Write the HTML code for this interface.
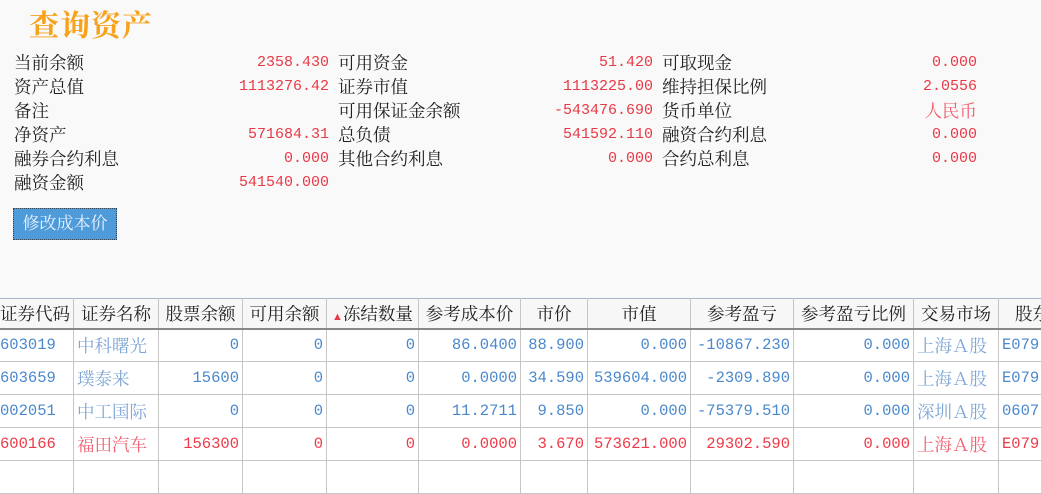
<!DOCTYPE html>
<html><head><meta charset="utf-8"><style>
*{margin:0;padding:0;box-sizing:border-box}
body{width:1041px;height:477px;overflow:hidden;background:#f9f9f9;font-family:"Liberation Serif","Noto Serif CJK SC",serif;font-size:17.5px;color:#222;position:relative}
.t{position:absolute;left:29px;top:1px;font-size:30px;color:#f7a21b;font-family:"Noto Serif CJK SC",serif;font-weight:bold;letter-spacing:1px}
.r{position:absolute;height:24px;line-height:24px;white-space:nowrap}
.n{font-family:"Liberation Mono",monospace;font-size:15px;color:#e83a46;text-align:right}
.btn{position:absolute;left:13px;top:208px;width:104px;height:32px;background:#4f9bd9;border:1px dotted #345;color:#e8f2ff;line-height:30px;text-align:center;font-size:17px}
table{position:absolute;left:-4px;top:298px;width:1062px;border-collapse:collapse;table-layout:fixed;background:#fff}
td,th{height:33px;border:1px solid #c6c6c6;white-space:nowrap;overflow:hidden;padding:0 3px;font-weight:normal;text-align:right;font-family:"Liberation Mono","Noto Serif CJK SC",monospace;font-size:15.5px}
th{background:#f7f7f7;height:30px;border-top:1px solid #a8b8c8;border-bottom:2px solid #888;border-left:1px solid #888;text-align:center;font-family:"Liberation Serif","Noto Serif CJK SC",serif;font-size:17.5px;color:#222;padding:0 1px}
td.c{text-align:left;font-family:"Noto Serif CJK SC",serif;font-size:17.5px}
.b td{color:#4a88cc}
.b td.c{color:#7ea6d6}
.rd td{color:#ee3a48}
.rd td.c{color:#f06070}
</style></head><body>
<div class="t">查询资产</div>
<div class="r" style="left:14px;top:51px">当前余额</div><div class="r n" style="left:180px;width:149px;top:51px">2358.430</div>
<div class="r" style="left:338px;top:51px">可用资金</div><div class="r n" style="left:500px;width:153px;top:51px">51.420</div>
<div class="r" style="left:662px;top:51px">可取现金</div><div class="r n" style="left:820px;width:157px;top:51px">0.000</div>
<div class="r" style="left:14px;top:75px">资产总值</div><div class="r n" style="left:180px;width:149px;top:75px">1113276.42</div>
<div class="r" style="left:338px;top:75px">证券市值</div><div class="r n" style="left:500px;width:153px;top:75px">1113225.00</div>
<div class="r" style="left:662px;top:75px">维持担保比例</div><div class="r n" style="left:820px;width:157px;top:75px">2.0556</div>
<div class="r" style="left:14px;top:99px">备注</div>
<div class="r" style="left:338px;top:99px">可用保证金余额</div><div class="r n" style="left:500px;width:153px;top:99px">-543476.690</div>
<div class="r" style="left:662px;top:99px">货币单位</div><div class="r n" style="left:820px;width:157px;top:99px;font-family:'Noto Serif CJK SC',serif;font-size:17.5px;color:#f06070">人民币</div>
<div class="r" style="left:14px;top:123px">净资产</div><div class="r n" style="left:180px;width:149px;top:123px">571684.31</div>
<div class="r" style="left:338px;top:123px">总负债</div><div class="r n" style="left:500px;width:153px;top:123px">541592.110</div>
<div class="r" style="left:662px;top:123px">融资合约利息</div><div class="r n" style="left:820px;width:157px;top:123px">0.000</div>
<div class="r" style="left:14px;top:147px">融券合约利息</div><div class="r n" style="left:180px;width:149px;top:147px">0.000</div>
<div class="r" style="left:338px;top:147px">其他合约利息</div><div class="r n" style="left:500px;width:153px;top:147px">0.000</div>
<div class="r" style="left:662px;top:147px">合约总利息</div><div class="r n" style="left:820px;width:157px;top:147px">0.000</div>
<div class="r" style="left:14px;top:171px">融资金额</div><div class="r n" style="left:180px;width:149px;top:171px">541540.000</div>
<div class="btn">修改成本价</div>
<table>
<colgroup><col style="width:77px"><col style="width:85px"><col style="width:84px"><col style="width:84px"><col style="width:92px"><col style="width:102px"><col style="width:67px"><col style="width:103px"><col style="width:103px"><col style="width:120px"><col style="width:85px"><col style="width:60px"></colgroup>
<tr><th>证券代码</th><th>证券名称</th><th>股票余额</th><th>可用余额</th><th><span style="color:#e83a46;font-size:11px">▲</span>冻结数量</th><th>参考成本价</th><th>市价</th><th>市值</th><th>参考盈亏</th><th>参考盈亏比例</th><th>交易市场</th><th style="text-align:left;padding-left:16px">股东</th></tr>
<tr class="b"><td style="text-align:left">603019</td><td class="c">中科曙光</td><td>0</td><td>0</td><td>0</td><td>86.0400</td><td>88.900</td><td>0.000</td><td>-10867.230</td><td>0.000</td><td class="c">上海Ａ股</td><td style="text-align:left">E079</td></tr>
<tr class="b"><td style="text-align:left">603659</td><td class="c">璞泰来</td><td>15600</td><td>0</td><td>0</td><td>0.0000</td><td>34.590</td><td>539604.000</td><td>-2309.890</td><td>0.000</td><td class="c">上海Ａ股</td><td style="text-align:left">E079</td></tr>
<tr class="b"><td style="text-align:left">002051</td><td class="c">中工国际</td><td>0</td><td>0</td><td>0</td><td>11.2711</td><td>9.850</td><td>0.000</td><td>-75379.510</td><td>0.000</td><td class="c">深圳Ａ股</td><td style="text-align:left">0607</td></tr>
<tr class="rd"><td style="text-align:left">600166</td><td class="c">福田汽车</td><td>156300</td><td>0</td><td>0</td><td>0.0000</td><td>3.670</td><td>573621.000</td><td>29302.590</td><td>0.000</td><td class="c">上海Ａ股</td><td style="text-align:left">E079</td></tr>
<tr><td></td><td></td><td></td><td></td><td></td><td></td><td></td><td></td><td></td><td></td><td></td><td></td></tr>
</table>
</body></html>
